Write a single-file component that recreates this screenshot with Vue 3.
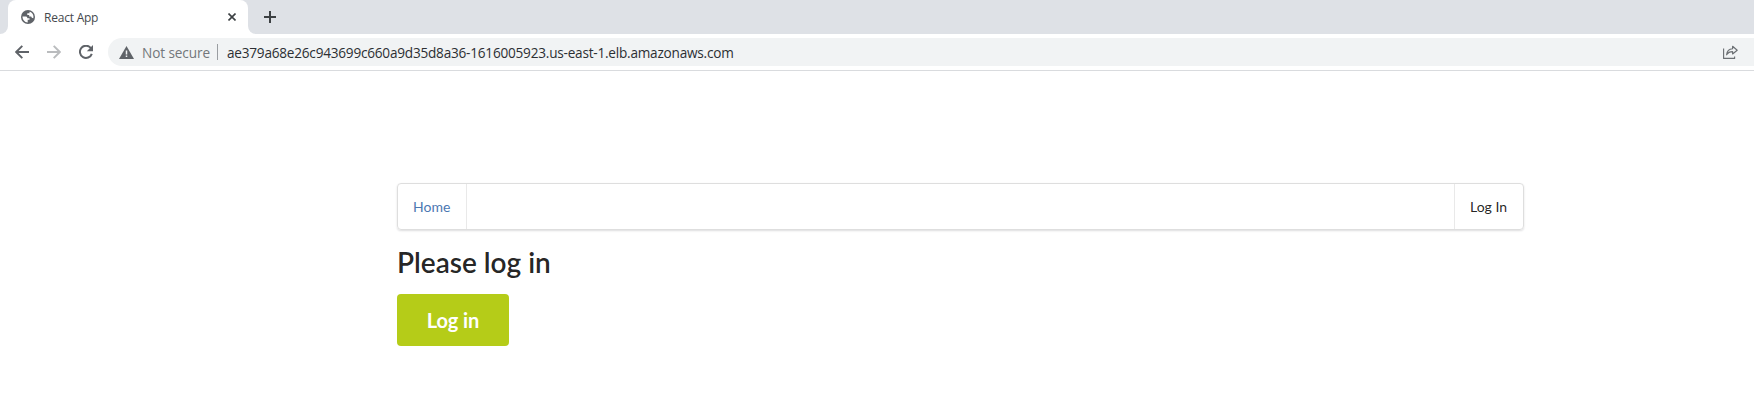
<script setup>
const address = 'ae379a68e26c943699c660a9d35d8a36-1616005923.us-east-1.elb.amazonaws.com'
</script>

<template>
  <div class="browser">
    <header class="tabs">
      <div class="edge"></div>
      <div class="tab">
        <svg class="globe" width="14" height="14" viewBox="0 0 14 14">
          <circle cx="7" cy="7" r="7" fill="#5f6368" />
          <path d="M1.5 6.6H4.5C5.7 6.6 6.4 7.3 6.4 8.3H8.5V9.8H6.7V12.5C3.6 12.4 1.5 9.8 1.5 6.6ZM8.5 1.7V3.3H6.3V5.1H8.2V6.6H10.2C10.5 7.8 11.2 8.2 12.3 8.2C13.1 5.1 11.2 2.3 8.5 1.7Z" fill="#fff" />
        </svg>
        <span class="title">React App</span>
        <svg class="close" width="8" height="8" viewBox="0 0 8 8"><path d="M.5.5L7.5 7.5M7.5.5L.5 7.5" stroke="#3c4043" stroke-width="1.6" /></svg>
      </div>
      <div class="rest">
        <svg width="12" height="12" viewBox="0 0 12 12"><path d="M6 0V12M0 6H12" stroke="#3c4043" stroke-width="2" /></svg>
      </div>
    </header>
    <div class="toolbar">
      <svg class="arrow" width="14" height="14" viewBox="0 0 14 14"><path d="M14 7H1.5M7.3 .8L1.2 7L7.3 13.2" fill="none" stroke="#5f6368" stroke-width="1.9" /></svg>
      <svg class="arrow forward" width="14" height="14" viewBox="0 0 14 14"><path d="M0 7H12.5M6.7 .8L12.8 7L6.7 13.2" fill="none" stroke="#babcbe" stroke-width="1.9" /></svg>
      <svg class="reload" width="14" height="14" viewBox="0 0 14 14"><path d="M11.8 3A6.1 6.1 0 1 0 12.8 8.8" fill="none" stroke="#5f6368" stroke-width="2" /><path d="M14 0V6.2H7.8Z" fill="#5f6368" /></svg>
      <div class="omnibox">
        <svg width="15" height="13" viewBox="0 0 15 13"><path d="M7.5 0L15 13H0Z" fill="#5f6368" /><path d="M7.5 4.6V8.4M7.5 9.6V11.1" stroke="#f1f3f4" stroke-width="1.5" /></svg>
        <span class="insecure">Not secure</span>
        <i class="divider"></i>
        <span class="address">{{ address }}</span>
        <svg class="share" width="15" height="14" viewBox="0 0 15 14"><path d="M.6 3.5V13.4H11.6V11.5M3.6 9.8C4 6 6 4 9.6 3.8V1.2L14.2 5.2L9.6 9V6.6C6.8 6.6 4.9 7.6 3.6 9.8Z" fill="none" stroke="#6b6f73" stroke-width="1.15" stroke-linejoin="round" /></svg>
      </div>
    </div>
    <main class="container">
      <nav class="menu">
        <a class="item home">Home</a>
        <a class="item login">Log In</a>
      </nav>
      <h1>Please log in</h1>
      <button type="button">Log in</button>
    </main>
  </div>
</template>

<style>
body { margin: 0; background: #fff; overflow: hidden; }
</style>

<style scoped>
* { box-sizing: border-box; }
svg { display: block; flex: none; }
.browser { height: 419px; background: #fff; font-family: Lato, sans-serif; }
.tabs { display: flex; height: 34px; background: #fff; font-family: "Open Sans", sans-serif; }
.edge { width: 8px; background: #dee1e6; border-bottom-right-radius: 8px; }
.tab { width: 240px; display: flex; align-items: center; padding: 0 12px 0 13px; background: linear-gradient(#dee1e6 0 10px, #fff 10px); position: relative; z-index: 0; }
.tab::before { content: ""; position: absolute; inset: 0; z-index: -1; background: #fff; border-radius: 8px 8px 0 0; }
.title { margin-left: 9px; font-size: 12px; letter-spacing: -.22px; color: #45494d; white-space: nowrap; }
.close { margin-left: auto; }
.rest { flex: 1; display: flex; align-items: center; padding-left: 16px; background: #dee1e6; border-bottom-left-radius: 8px; }
.toolbar { height: 37px; display: flex; align-items: center; padding-left: 15px; border-bottom: 1px solid #d9dbde; font-family: "Open Sans", sans-serif; }
.forward { margin-left: 18px; }
.reload { margin-left: 18px; }
.omnibox { margin-left: 15px; flex: 1; height: 28px; display: flex; align-items: center; padding: 0 16px 0 11px; border-radius: 14px 0 0 14px; background: #f1f3f4; font-size: 13.6px; white-space: nowrap; }
.insecure { width: 67px; margin-left: 8px; color: #73777b; letter-spacing: -.1px; }
.divider { width: 1px; height: 16px; margin-left: 8px; background: #9a9da1; }
.address { margin-left: 9px; color: #2c2f33; letter-spacing: -.22px; }
.share { margin-left: auto; }
.container { width: 1127px; margin: 112px 0 0 397px; }
.menu { display: flex; justify-content: space-between; height: 47px; border: 1px solid #dedede; border-radius: 4px; box-shadow: 0 1px 2px rgba(34,36,38,.15); }
.item { display: flex; align-items: center; padding: 0 15px; font-size: 14px; white-space: nowrap; color: rgba(0,0,0,.87); }
.home { width: 69px; border-right: 1px solid #e9e9e9; color: #4c78b2; }
.login { width: 69px; border-left: 1px solid #e9e9e9; }
h1 { margin: 14px 0; font-size: 28px; line-height: 36px; font-weight: 600; color: rgba(0,0,0,.87); white-space: nowrap; }
button { display: block; width: 112px; height: 52px; padding: 0; border: 0; border-radius: 4px; background: #b5cc18; color: #fff; font: 700 20px/20px Lato, sans-serif; letter-spacing: -.1px; }
</style>
